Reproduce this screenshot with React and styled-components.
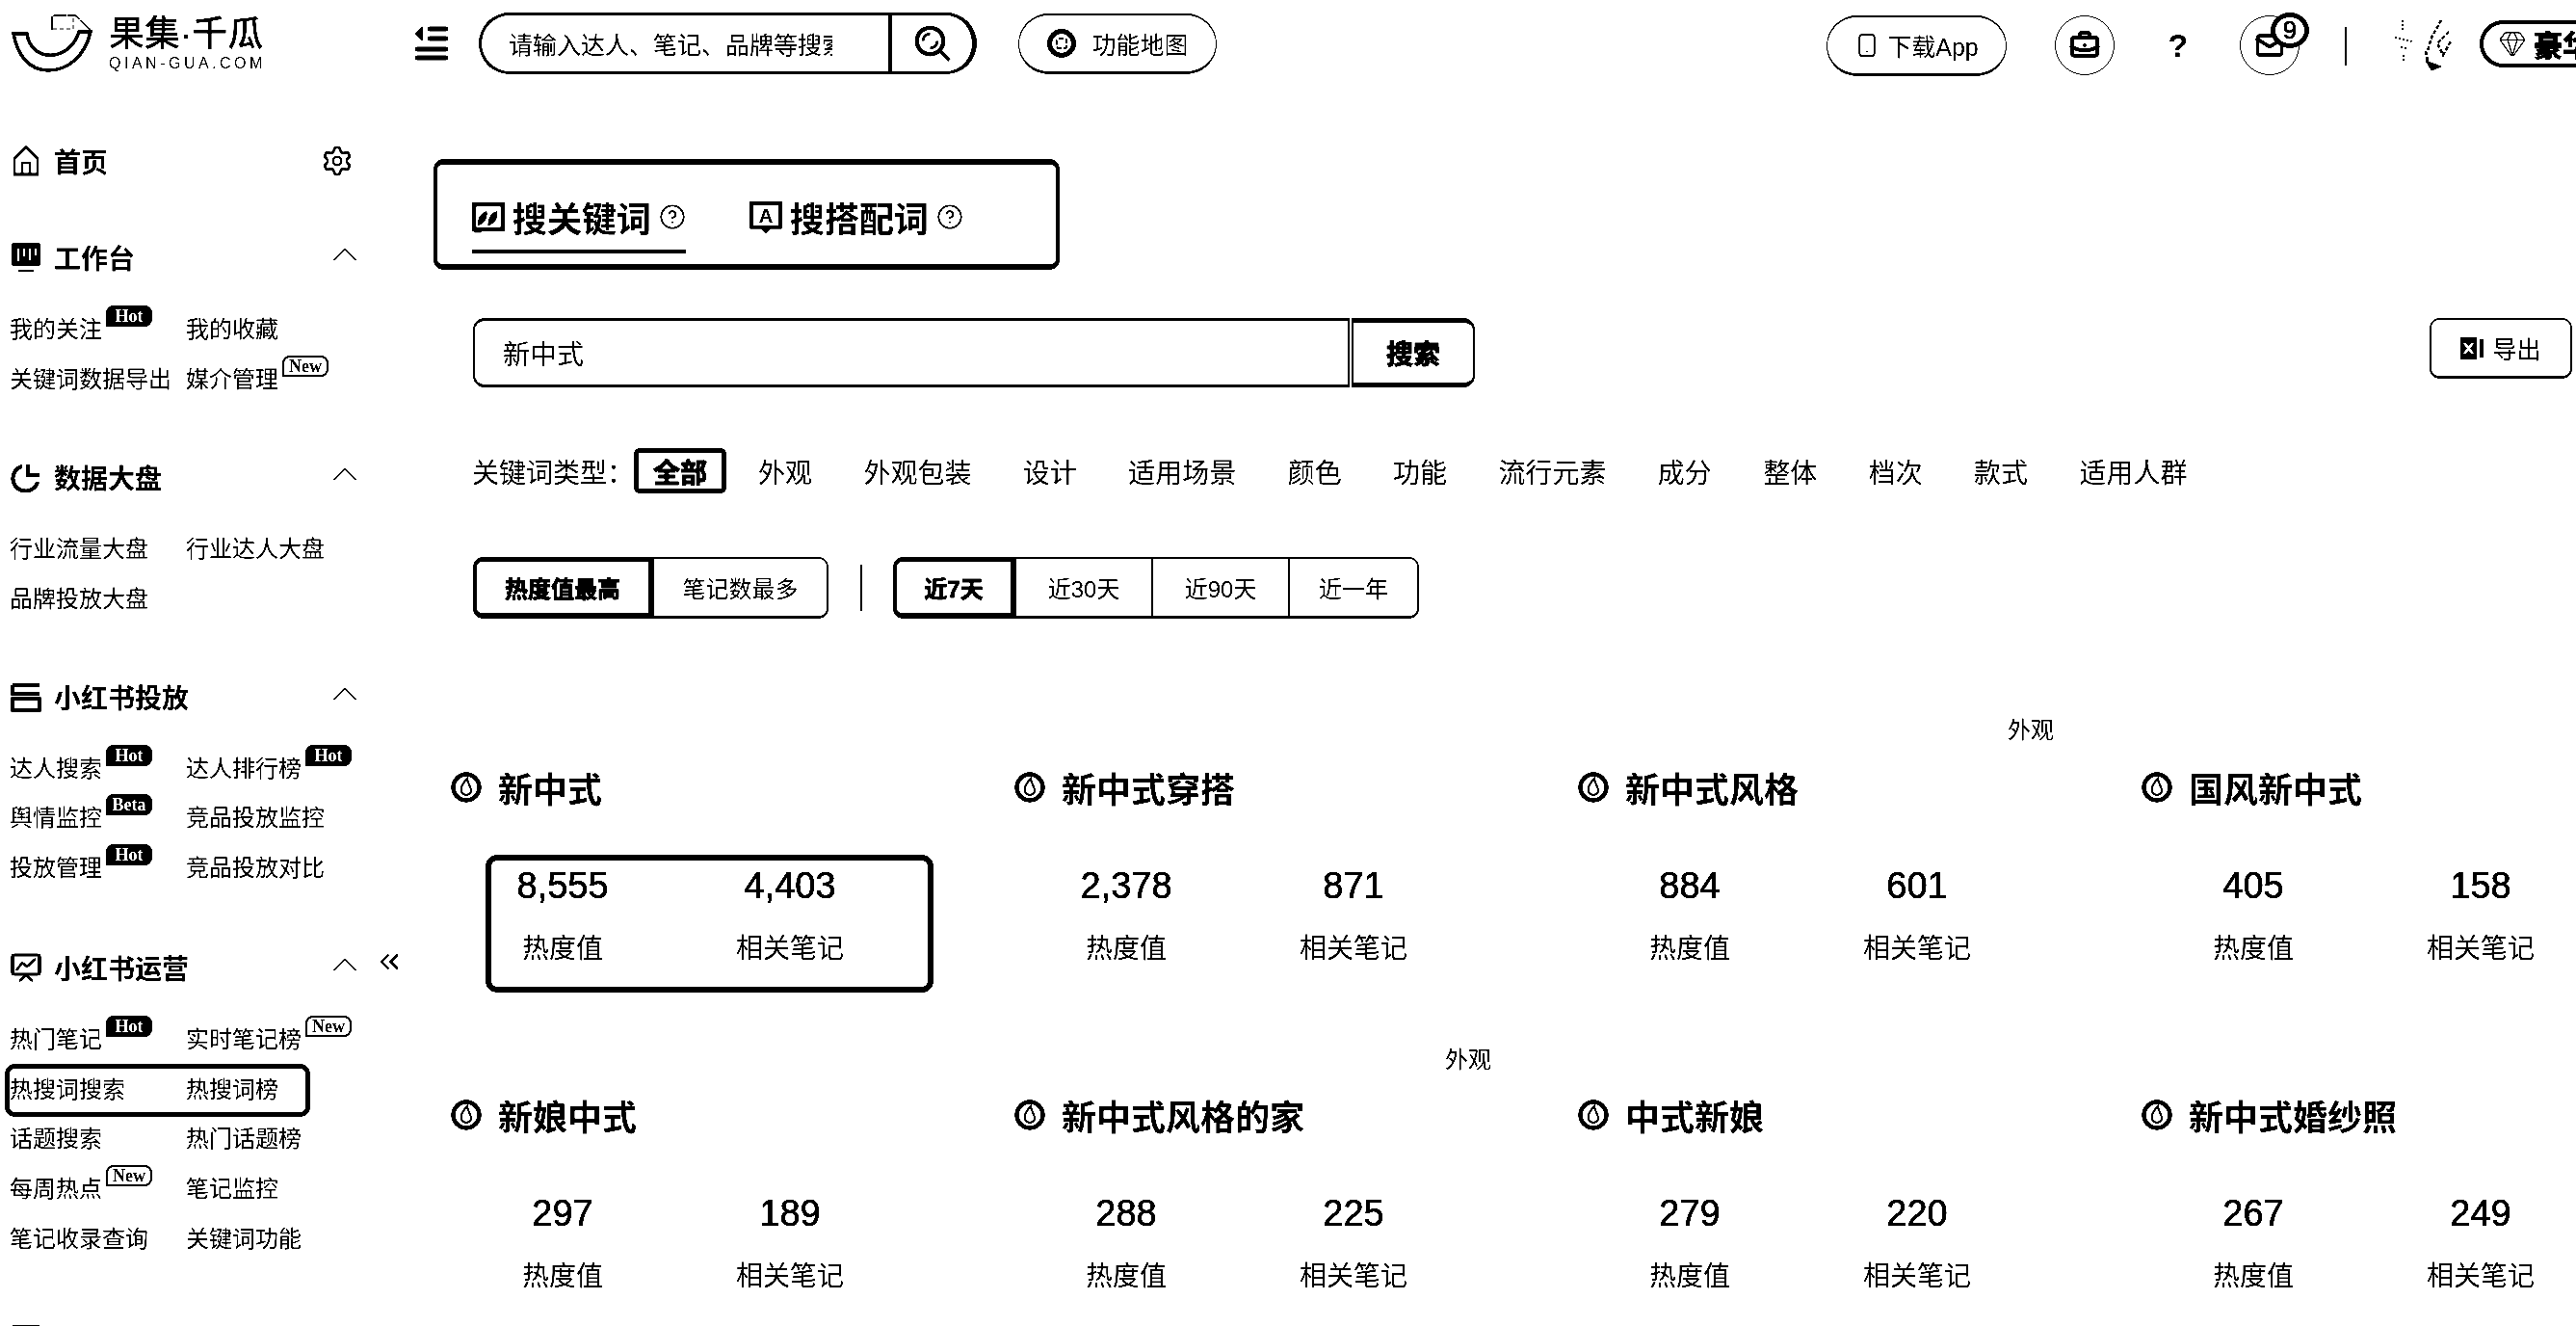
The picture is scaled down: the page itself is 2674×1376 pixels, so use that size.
import React from "react";
import styled, { createGlobalStyle } from "styled-components";
import { ChevronUp, ChevronsLeft, Settings, Smartphone, BriefcaseBusiness, Mail, Gem, CircleHelp } from "lucide-react";

const Global = createGlobalStyle`
  html, body { margin: 0; padding: 0; background: #fff; overflow: hidden; }
  body { font-family: "Liberation Sans", "Noto Sans CJK SC", sans-serif; color: #000; }
`;

const Page = styled.div`
  width: 2674px; height: 1376px; overflow: hidden; background: #fff; position: relative;
  filter: contrast(6);
`;
const Header = styled.header`
  height: 90px; display: flex; align-items: center; padding-left: 12px; white-space: nowrap;
`;
const LogoBox = styled.div`display: flex; align-items: center; width: 418px; flex: none; gap: 17px;`;
const LogoText = styled.div`display: flex; flex-direction: column; align-items: flex-start;`;
const LogoName = styled.div`font-size: 37px; line-height: 42px; font-weight: 500; letter-spacing: 0;`;
const LogoSub = styled.div`font-size: 16px; line-height: 18px; letter-spacing: 3.5px;`;
const Burger = styled.div`width: 67px; flex: none; display: flex;`;
const SearchPill = styled.div`
  width: 517px; height: 64px; flex: none; box-sizing: border-box; border: 3px solid #000; border-radius: 32px;
  border-right-width: 5px; display: flex; overflow: hidden;
`;
const SearchInput = styled.div`
  width: 426px; flex: none; box-sizing: border-box; padding: 0 58px 0 28px; display: flex; align-items: center;
  border-right: 4px solid #000;
`;
const SearchHint = styled.div`font-size: 25px; overflow: hidden; white-space: nowrap;`;
const SearchGo = styled.div`flex: 1; display: flex; align-items: center; justify-content: center;`;
const PillBtn = styled.div`
  height: 63px; box-sizing: border-box; border: solid #000; border-width: 2px 1px 3px; border-radius: 32px; display: flex;
  align-items: center; justify-content: center; gap: ${p => p.$gap || 10}px; font-size: 25px; width: ${p => p.$w}px;
  margin-left: ${p => p.$ml}px; flex: none; margin-top: ${p => p.$mt || 0}px;
`;
const Circle = styled.div`
  width: 62px; height: 62px; border: 1px solid ${p => (p.$none ? "transparent" : "#000")}; border-radius: 50%;
  box-sizing: border-box; display: flex; align-items: center; justify-content: center; position: relative;
  margin-left: ${p => p.$ml}px; margin-top: 4px; flex: none; font-size: 34px; font-weight: 700;
`;
const Badge = styled.div`
  position: absolute; top: -4px; right: -11px; width: 40px; height: 37px; border-radius: 50%; background: #fff;
  border: 5px solid #000; box-sizing: border-box; font-size: 26px; line-height: 27px; text-align: center; font-weight: 400;
  -webkit-text-stroke: 0.8px #000;
`;
const VBar = styled.div`width: 2px; height: ${p => p.$h}px; background: #000; margin: 6px 0 0 ${p => p.$ml}px; flex: none;`;
const Avatar = styled.svg`width: 66px; height: 56px; margin: 4px 0 0 48px; flex: none;`;
const Member = styled.div`
  flex: none; margin-left: 24px; width: 160px; height: 49px; box-sizing: border-box; border: 4px solid #000; border-radius: 25px;
  display: flex; align-items: center; padding-left: 15px; gap: 7px; font-size: 30px; font-weight: 700; -webkit-text-stroke: 1px #000;
`;

const Body = styled.div`display: flex;`;
const Side = styled.aside`width: 450px; flex: none; padding-top: 56px; position: relative; box-sizing: border-box;`;
const HomeRow = styled.div`
  display: flex; align-items: center; height: 42px; padding-left: 11px; width: 367px; box-sizing: border-box; justify-content: space-between;
  margin-bottom: 58px;
`;
const HeadLeft = styled.div`display: flex; align-items: center; gap: 13px; font-size: 28px; font-weight: 700; white-space: nowrap;`;
const Section = styled.section`margin-bottom: ${p => p.$mb}px;`;
const SecHead = styled.div`
  display: flex; align-items: center; justify-content: space-between; height: 42px; padding-left: 11px; width: 380px; box-sizing: border-box;
  margin-bottom: 28px;
`;
const Chev = styled(ChevronUp)`margin-bottom: 6px; flex: none;`;
const Links = styled.div`display: grid; grid-template-columns: 183px 190px; grid-auto-rows: 51.7px; width: 373px; padding-left: 10px; position: relative;`;
const LinkItem = styled.div`font-size: 24px; line-height: 51px; white-space: nowrap; position: relative; z-index: 1;`;
const Tag = styled.span`
  position: absolute; top: 1px; margin-left: 4px; font-family: "Liberation Serif", serif; font-size: 18px; line-height: 19px; height: 22px; width: 48px; box-sizing: border-box;
  border: 2px solid #000; border-radius: 8px 8px 8px 0; text-align: center; font-weight: 700;
  background: ${p => (p.$solid ? "#000" : "#fff")}; color: ${p => (p.$solid ? "#fff" : "#000")};
`;
const ActiveBox = styled.div`
  position: absolute; left: 5px; top: 51.5px; width: 317px; height: 55px; box-sizing: border-box; border: 5px solid #000; border-radius: 10px;
`;
const Collapse = styled.div`position: absolute; left: 388px; top: 892px;`;

const Main = styled.main`flex: 1; min-width: 0; padding-top: 75px; position: relative;`;
const TabBox = styled.div`
  width: 650px; height: 115px; box-sizing: border-box; border: 4px solid #000; border-top-width: 6px; border-bottom-width: 6px; border-radius: 10px;
  display: flex; gap: 66px; padding: 30px 0 0 36px;
`;
const Tab = styled.div`
  display: flex; align-items: center; gap: 8px; font-size: 36px; font-weight: 700; height: 62px; align-self: flex-start; box-sizing: border-box;
  padding-bottom: 10px; border-bottom: 4px solid ${p => (p.$on ? "#000" : "transparent")};
`;
const SearchRow = styled.div`display: flex; margin: 50px 0 0 41px; height: 72px; position: relative;`;
const BigInput = styled.div`
  width: 910px; box-sizing: border-box; border: 2px solid #000; border-top-width: 3px; border-bottom-width: 3px; border-radius: 12px 0 0 12px; display: flex; align-items: center;
  padding-left: 29px; font-size: 28px;
`;
const BigBtn = styled.div`
  width: 128px; margin-left: 2px; box-sizing: border-box; border: 2px solid #000; border-top-width: 5px; border-bottom-width: 5px; border-radius: 0 12px 12px 0; display: flex;
  align-items: center; justify-content: center; font-size: 28px; font-weight: 700; -webkit-text-stroke: 1px #000;
`;
const Export = styled.div`
  position: absolute; left: 2031px; top: 0; width: 148px; height: 63px; box-sizing: border-box; border: 2px solid #000; border-bottom-width: 3px; border-radius: 10px;
  display: flex; align-items: center; justify-content: center; gap: 8px; font-size: 25px;
`;
const TypeRow = styled.div`display: flex; align-items: center; margin: 63px 0 0 40px; height: 47px; font-size: 28px; white-space: nowrap;`;
const TypeLabel = styled.div`width: 168px;`;
const TypeItem = styled.div`
  box-sizing: border-box; height: 47px; display: flex; align-items: center; justify-content: center;
  ${p => p.$on ? "width: 96px; border: 5px solid #000; border-radius: 6px; font-weight: 700; margin-right: 33px; -webkit-text-stroke: 1px #000;" : "margin-right: 53.4px;"}
`;
const FilterRow = styled.div`display: flex; align-items: center; margin: 66px 0 0 41px; height: 64px;`;
const Seg = styled.div`
  box-sizing: border-box; height: 64px; display: flex; align-items: center; justify-content: center; font-size: 24px; width: ${p => p.$w}px;
  border: solid #000; border-width: 2px ${p => (p.$last ? 2 : 0)}px 3px 2px;
  border-radius: ${p => (p.$first ? "10px 0 0 10px" : p.$last ? "0 10px 10px 0" : "0")};
  ${p => p.$on && "font-weight: 700; border-width: 5px 4px 6px 4px; -webkit-text-stroke: 0.8px #000;"}
`;
const Sep = styled.div`width: 2px; height: 48px; background: #000; margin: 0 32px 0 33px;`;

const Grid = styled.div`display: grid; grid-template-columns: repeat(4, 585px); grid-auto-rows: 340px; margin: 153px 0 0 18px; position: relative;`;
const Card = styled.div`position: relative;`;
const CardTitle = styled.div`display: flex; align-items: center; gap: 17px; height: 44px; font-size: 36px; font-weight: 700; white-space: nowrap;`;
const Stats = styled.div`
  position: absolute; left: 36px; top: 92px; width: 465px; height: 143px; box-sizing: border-box; border: 6px solid ${p => (p.$on ? "#000" : "transparent")}; border-radius: 12px;
`;
const Stat = styled.div`
  position: absolute; top: 1px; width: 200px; margin-left: -100px; left: ${p => p.$x}px; text-align: center; white-space: nowrap;
`;
const Num = styled.div`font-size: 38px; line-height: 50px; -webkit-text-stroke: 0.6px #000;`;
const Lab = styled.div`font-size: 28px; line-height: 40px; margin-top: 21px;`;
const Float = styled.div`position: absolute; font-size: 24px; left: ${p => p.$x}px; top: ${p => p.$y}px;`;

const Svg = ({ s = 32, children, ...r }) => (
  <svg width={s} height={s} viewBox="0 0 32 32" fill="none" stroke="#000" style={{ flex: "none" }} {...r}>{children}</svg>
);
const Logo = () => (
  <svg width="84" height="62" viewBox="12 15 84 62" fill="none" stroke="#000" style={{ flex: "none" }}>
    <path d="M14 36 H28 C32 66 72 66 82 34 H94 C88 60 70 74 50 74 C30 74 18 58 14 36Z" strokeWidth="3.5" fill="#fff" />
    <path d="M54 32 V20 Q54 17 57 17 H78 L95 33" strokeWidth="1.6" strokeDasharray="14 1" />
    <path d="M55 31 H76 V18" strokeWidth="1" strokeDasharray="4 3" />
  </svg>
);
const BurgerIcon = () => (
  <svg width="36" height="36" viewBox="0 0 36 36" stroke="#000" strokeWidth="5" strokeLinecap="round" fill="none">
    <path d="M8 1 L1 8 L8 15Z" fill="#000" strokeWidth="1" />
    <path d="M16 3 H33 M16 13 H33 M3 24 H33 M3 33 H33" />
  </svg>
);
const SearchIcon = () => (
  <Svg s={40}>
    <circle cx="14" cy="14" r="11" strokeWidth="3.4" />
    <path d="M8 14 A6 6 0 0 1 14 8 M20 14 A6 6 0 0 1 14 20" strokeWidth="2.4" />
    <path d="M22 22 L30 30" strokeWidth="3.2" />
  </Svg>
);
const MapIcon = () => (
  <Svg s={32}>
    <circle cx="16" cy="16" r="12.5" strokeWidth="5" />
    <rect x="11" y="11" width="10" height="10" rx="2" strokeWidth="2" strokeDasharray="5 2" />
  </Svg>
);
const HomeIcon = () => (
  <Svg><path d="M4 30 V13 L16 2 L28 13 V30 Z" strokeWidth="2.8" /><path d="M12 30 V18 H20 V30" strokeWidth="2.4" /></Svg>
);
const MonitorIcon = () => (
  <Svg>
    <rect x="1" y="1" width="30" height="24" rx="3" fill="#000" stroke="none" />
    <path d="M8 7 V20 M14 7 V15 M20 7 V19 M26 7 V14" stroke="#fff" strokeWidth="2.4" />
    <path d="M8 30 H24" strokeWidth="2.6" />
  </Svg>
);
const PieIcon = () => (
  <Svg><path d="M12 5 A13 13 0 1 0 28 21" strokeWidth="4" /><path d="M18 3 V14 H30" strokeWidth="4" /></Svg>
);
const StackIcon = () => (
  <Svg><path d="M2 4 H30 M2 4 V13 H30" strokeWidth="3.4" /><rect x="2" y="18" width="28" height="12" strokeWidth="3.4" /></Svg>
);
const ChartIcon = () => (
  <Svg>
    <rect x="2" y="3" width="28" height="20" rx="2" strokeWidth="3.2" />
    <path d="M6 19 L12 11 L17 15 L26 7" strokeWidth="2.6" />
    <path d="M9 30 L16 24 L23 30" strokeWidth="2.6" />
  </Svg>
);
const KeywordIcon = () => (
  <Svg s={34}>
    <rect x="2" y="4" width="28" height="24" strokeWidth="4" />
    <path d="M6 24 C6 16 10 12 14 11 C15 18 12 22 6 24Z M16 24 C16 16 20 12 24 11 C25 18 22 22 16 24Z" fill="#000" strokeWidth="1" />
    <path d="M2 30 H9" strokeWidth="3" />
  </Svg>
);
const PairIcon = () => (
  <Svg s={34}>
    <rect x="2" y="3" width="28" height="23" strokeWidth="3.6" />
    <text x="16" y="22" textAnchor="middle" fontSize="19" fontWeight="700" fill="#000" stroke="none" fontFamily="Liberation Sans">A</text>
    <path d="M11 26 L16 32 L21 26Z" fill="#000" strokeWidth="1" />
  </Svg>
);
const FlameRing = () => (
  <Svg>
    <circle cx="16" cy="16" r="13.5" strokeWidth="4.4" />
    <path d="M17 7 C12 12 10 16 11 20 C12 25 20 25 21 20 C22 17 18 14 17 7Z" strokeWidth="2" />
  </Svg>
);
const ExcelIcon = () => (
  <svg width="25" height="25" viewBox="0 0 25 25" style={{ flex: "none" }}>
    <rect x="0" y="1" width="17" height="23" fill="#000" />
    <path d="M4 7 L13 18 M13 7 L4 18" stroke="#fff" strokeWidth="2.4" />
    <rect x="20" y="3" width="4" height="19" fill="#000" />
  </svg>
);

const links = {
  work: [["我的关注", "Hot", 1], ["我的收藏"], ["关键词数据导出"], ["媒介管理", "New"]],
  data: [["行业流量大盘"], ["行业达人大盘"], ["品牌投放大盘"]],
  put: [["达人搜索", "Hot", 1], ["达人排行榜", "Hot", 1], ["舆情监控", "Beta", 1], ["竞品投放监控"], ["投放管理", "Hot", 1], ["竞品投放对比"]],
  op: [["热门笔记", "Hot", 1], ["实时笔记榜", "New"], ["热搜词搜索"], ["热搜词榜"], ["话题搜索"], ["热门话题榜"], ["每周热点", "New"], ["笔记监控"], ["笔记收录查询"], ["关键词功能"]],
};
const LinkGrid = ({ items, children }) => (
  <Links>
    {children}
    {items.map(([t, tag, solid]) => (
      <LinkItem key={t}>{t}{tag && <Tag $solid={solid}>{tag}</Tag>}</LinkItem>
    ))}
  </Links>
);
const SecHeader = ({ icon: I, title }) => (
  <SecHead>
    <HeadLeft><I />{title}</HeadLeft>
    <Chev size={44} strokeWidth={1.1} />
  </SecHead>
);

const types = ["外观", "外观包装", "设计", "适用场景", "颜色", "功能", "流行元素", "成分", "整体", "档次", "款式", "适用人群"];
const cards = [
  ["新中式", "8,555", "4,403"], ["新中式穿搭", "2,378", "871"], ["新中式风格", "884", "601"], ["国风新中式", "405", "158"],
  ["新娘中式", "297", "189"], ["新中式风格的家", "288", "225"], ["中式新娘", "279", "220"], ["新中式婚纱照", "267", "249"],
];

export default function App() {
  return (
    <Page>
      <Global />
      <Header>
        <LogoBox>
          <Logo />
          <LogoText><LogoName>果集·千瓜</LogoName><LogoSub>QIAN-GUA.COM</LogoSub></LogoText>
        </LogoBox>
        <Burger><BurgerIcon /></Burger>
        <SearchPill>
          <SearchInput><SearchHint>请输入达人、笔记、品牌等搜索达人</SearchHint></SearchInput>
          <SearchGo><SearchIcon /></SearchGo>
        </SearchPill>
        <PillBtn $w={206} $ml={43} $gap={15}><MapIcon />功能地图</PillBtn>
        <PillBtn $w={187} $ml={633} $mt={5} $gap={8}><Smartphone size={26} strokeWidth={1.8} />下载App</PillBtn>
        <Circle $ml={50}><BriefcaseBusiness size={32} strokeWidth={3} /></Circle>
        <Circle $ml={35} $none>?</Circle>
        <Circle $ml={33}><Mail size={30} strokeWidth={3} /><Badge>9</Badge></Circle>
        <VBar $h={40} $ml={47} />
        <Avatar viewBox="0 0 66 56" fill="none" stroke="#000">
          <path d="M10 2 V14 M2 20 L20 24 M8 30 L16 32 M11 38 V44" strokeWidth="2" strokeDasharray="2 2" />
          <path d="M50 2 L40 20 L36 34 M58 14 L46 26 L52 38 L60 24 M34 34 L36 44" strokeWidth="2.5" strokeDasharray="4 2" />
          <path d="M34 44 L50 50 L40 54Z" fill="#000" strokeWidth="1" />
        </Avatar>
        <Member><Gem size={30} strokeWidth={1} />豪华版</Member>
      </Header>
      <Body>
        <Side>
          <HomeRow>
            <HeadLeft><HomeIcon />首页</HeadLeft>
            <Settings size={34} strokeWidth={1.8} />
          </HomeRow>
          <Section $mb={55}><SecHeader icon={MonitorIcon} title="工作台" /><LinkGrid items={links.work} /></Section>
          <Section $mb={54}><SecHeader icon={PieIcon} title="数据大盘" /><LinkGrid items={links.data} /></Section>
          <Section $mb={56}><SecHeader icon={StackIcon} title="小红书投放" /><LinkGrid items={links.put} /></Section>
          <Section $mb={57}>
            <SecHeader icon={ChartIcon} title="小红书运营" />
            <LinkGrid items={links.op}><ActiveBox /></LinkGrid>
          </Section>
          <SecHeader icon={StackIcon} title="策略分析" />
          <Collapse><ChevronsLeft size={32} strokeWidth={2} /></Collapse>
        </Side>
        <Main>
          <TabBox>
            <Tab $on><KeywordIcon />搜关键词<CircleHelp size={28} strokeWidth={1.6} /></Tab>
            <Tab><PairIcon />搜搭配词<CircleHelp size={28} strokeWidth={1.6} /></Tab>
          </TabBox>
          <SearchRow>
            <BigInput>新中式</BigInput>
            <BigBtn>搜索</BigBtn>
            <Export><ExcelIcon />导出</Export>
          </SearchRow>
          <TypeRow>
            <TypeLabel>关键词类型：</TypeLabel>
            <TypeItem $on>全部</TypeItem>
            {types.map((t, i) => <TypeItem key={i}>{t}</TypeItem>)}
          </TypeRow>
          <FilterRow>
            <Seg $w={186} $first $on>热度值最高</Seg>
            <Seg $w={183} $last>笔记数最多</Seg>
            <Sep />
            <Seg $w={126} $first $on>近7天</Seg>
            <Seg $w={142}>近30天</Seg>
            <Seg $w={142}>近90天</Seg>
            <Seg $w={136} $last>近一年</Seg>
          </FilterRow>
          <Grid>
            {cards.map(([t, a, b], i) => (
              <Card key={t}>
                <CardTitle><FlameRing />{t}</CardTitle>
                <Stats $on={i === 0}>
                  <Stat $x={74}><Num>{a}</Num><Lab>热度值</Lab></Stat>
                  <Stat $x={310}><Num>{b}</Num><Lab>相关笔记</Lab></Stat>
                </Stats>
              </Card>
            ))}
            <Float $x={1616} $y={-57}>外观</Float>
            <Float $x={1032} $y={285}>外观</Float>
          </Grid>
        </Main>
      </Body>
    </Page>
  );
}
